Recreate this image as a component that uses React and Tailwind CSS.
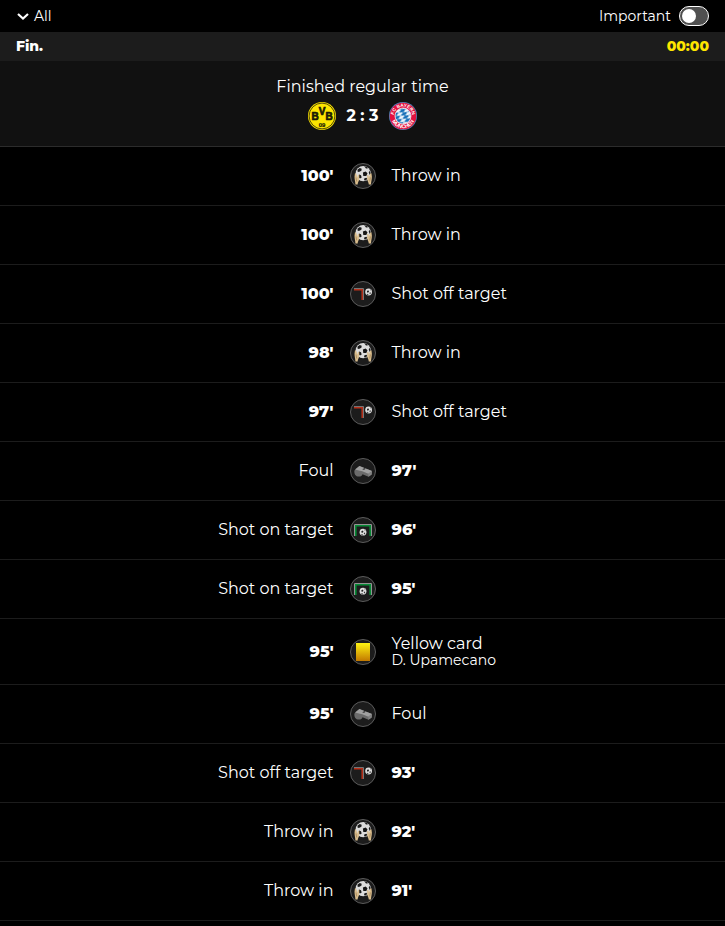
import { useState } from 'react';

const EVENTS = [
  { id: 1, side: 'away', minute: "100'", type: 'throw', label: 'Throw in' },
  { id: 2, side: 'away', minute: "100'", type: 'throw', label: 'Throw in' },
  { id: 3, side: 'away', minute: "100'", type: 'offTarget', label: 'Shot off target' },
  { id: 4, side: 'away', minute: "98'", type: 'throw', label: 'Throw in' },
  { id: 5, side: 'away', minute: "97'", type: 'offTarget', label: 'Shot off target' },
  { id: 6, side: 'home', minute: "97'", type: 'foul', label: 'Foul' },
  { id: 7, side: 'home', minute: "96'", type: 'onTarget', label: 'Shot on target' },
  { id: 8, side: 'home', minute: "95'", type: 'onTarget', label: 'Shot on target' },
  { id: 9, side: 'away', minute: "95'", type: 'yellow', label: 'Yellow card', player: 'D. Upamecano' },
  { id: 10, side: 'away', minute: "95'", type: 'foul', label: 'Foul' },
  { id: 11, side: 'home', minute: "93'", type: 'offTarget', label: 'Shot off target' },
  { id: 12, side: 'home', minute: "92'", type: 'throw', label: 'Throw in' },
  { id: 13, side: 'home', minute: "91'", type: 'throw', label: 'Throw in' },
];

function SmallBall({ cx, cy }) {
  return (
    <g transform={`translate(${cx} ${cy})`}>
      <circle r="3.4" fill="#dedede" />
      <path d="M-1.6-.9-.4-1.7.5-.5-.3.6-1.6.4z" fill="#222" />
      <path d="M.8.8 2 .2 2.2 1.6 1.1 2.2zM1.2-2.9 2.6-1.9 1.9-1.4zM-1.9 2.6-1.1 1.7-.2 2.2-.4 3.2z" fill="#333" />
    </g>
  );
}

function ThrowIn() {
  return (
    <>
      <circle cx="13.2" cy="10.6" r="7.6" fill="#dcdcdc" />
      <path d="m12.9 9.6 2.7-1.2 1.9 1.9-1.2 2.7-3 .1z" fill="#151515" />
      <path d="M7.6 6.6 9.8 4.9l1.9.8-.3 2-2.5 1.3-1.4-.5zM14.2 3.3l2.8.8.8 1.5-1.8-.2zM19.2 7.6l1.5 3-.9 1.5-1-2.4zM9 11.6l2 .6.7 2.2-1.7 1-1.6-1.3zM14.2 15.6l2-.9 1.3 1-1.9 1.9-1.5-.3z" fill="#1c1c1c" />
      <path d="M4.9 10.4c.8-.5 1.5.4 1.6 1.4l1 2.9.4-2.4c.3-.9 1.4-.6 1.4.3l-.2 4.2c-.2 1.5-1.3 2.5-1.5 4.6H5.4c0-2.8-.9-4.600-.9-7.600z" fill="#d9bd8d" />
      <path d="M21.500 10.4c-.8-.5-1.500.4-1.600 1.4l-1 2.900-.4-2.400c-.3-.9-1.400-.6-1.400.3l.2 4.200c.2 1.500 1.300 2.500 1.500 4.600H21c0-2.800.9-4.600.9-7.600z" fill="#d9bd8d" />
      <path d="M6 14.5 6.7 18.5M20.4 14.5l-.7 4" fill="none" stroke="#a17f50" strokeWidth=".7" />
    </>
  );
}

function OffTarget() {
  return (
    <>
      <path d="M4 7.5h9.5V19" fill="none" stroke="#757575" strokeWidth="1" />
      <path d="M4 8.8h8.2V19" fill="none" stroke="#b8301a" strokeWidth="1.5" />
      <SmallBall cx={18.6} cy={11} />
    </>
  );
}

function OnTarget() {
  return (
    <>
      <path d="M4.5 19V7.5h17V19" fill="none" stroke="#939393" strokeWidth="1" />
      <path d="M5.8 19V8.8h14.4V19" fill="none" stroke="#078b36" strokeWidth="1.6" />
      <SmallBall cx={13} cy={15.2} />
    </>
  );
}

function Whistle() {
  return (
    <>
      <path d="M4.4 12.4 9.4 8l12.600 5-.3 3.500-3.200 2.200-6-2.400c-.4 1.600-1.900 2.400-3.700 2.300-3.200-.2-4.800-2.600-4.400-6.200z" fill="#6b6b6b" />
      <path d="M5 11.6 9.4 8 22 13l-3.6 2.7-6.1-2.5-2.3-.4z" fill="#a0a0a0" />
      <path d="m18.4 15.7 3.6-2.7-.3 3.5-3.2 2.2z" fill="#858585" />
      <path d="m12.2 11.2 2.3-1.1 1.2.5-1.6 1.4z" fill="#3b3b3b" />
    </>
  );
}

function YellowCard() {
  return (
    <>
      <defs>
        <linearGradient id="card" x1="0" y1="0" x2="0" y2="1">
          <stop offset="0" stopColor="#fff412" />
          <stop offset="1" stopColor="#c27800" />
        </linearGradient>
      </defs>
      <path d="M6 4h14v18H6z" fill="url(#card)" />
    </>
  );
}

const ICONS = {
  throw: ThrowIn,
  offTarget: OffTarget,
  onTarget: OnTarget,
  foul: Whistle,
  yellow: YellowCard,
};

function EventIcon({ type }) {
  const Icon = ICONS[type];
  return (
    <svg viewBox="0 0 26 26" className="size-[26px]" aria-hidden="true">
      <circle cx="13" cy="13" r="12.5" fill="#1c1c1c" stroke="#5c5c5c" />
      <Icon />
    </svg>
  );
}

function DortmundLogo() {
  return (
    <svg viewBox="0 0 28 28" className="size-7" role="img" aria-label="Borussia Dortmund">
      <circle cx="14" cy="14" r="14" fill="#f5df00" />
      <circle cx="14" cy="14" r="12.9" fill="#fde500" stroke="#29250a" strokeWidth=".8" />
      <g fill="#1b1905" stroke="#1b1905" strokeWidth=".7" textAnchor="middle" fontFamily="Liberation Sans, sans-serif" fontWeight="700">
        <text x="7" y="18.2" fontSize="10">B</text>
        <text x="14" y="12.5" fontSize="10">V</text>
        <text x="21" y="18.2" fontSize="10">B</text>
        <text x="14" y="24.6" fontSize="6" strokeWidth=".2">09</text>
      </g>
    </svg>
  );
}

function BayernLogo() {
  return (
    <svg viewBox="0 0 28 28" className="size-7" role="img" aria-label="Bayern München">
      <defs>
        <pattern id="lozenge" width="3.6" height="8" patternUnits="userSpaceOnUse" patternTransform="rotate(62 14 14)">
          <path d="M0 0h3.6v8H0z" fill="#edf5fb" />
          <path d="m1.8 0 1.8 4-1.8 4L0 4z" fill="#1670b8" />
        </pattern>
        <path id="crestTop" d="M4.8 14a9.2 9.2 0 0 1 18.4 0" />
        <path id="crestBottom" d="M1.7 14a12.3 12.3 0 0 0 24.6 0" />
      </defs>
      <circle cx="14" cy="14" r="14" fill="#4a86bd" />
      <circle cx="14" cy="14" r="13.3" fill="#e4103f" />
      <circle cx="14" cy="14" r="8" fill="url(#lozenge)" stroke="#f7dfe6" strokeWidth=".8" />
      <g fill="#fff" textAnchor="middle" fontFamily="Liberation Sans, sans-serif" fontWeight="700">
        <text fontSize="4.6">
          <textPath href="#crestTop" startOffset="50%">FC BAYERN</textPath>
        </text>
        <text fontSize="5.4">
          <textPath href="#crestBottom" startOffset="50%">MÜNCHEN</textPath>
        </text>
      </g>
    </svg>
  );
}

function EventRow({ event }) {
  const minute = <span className="font-extrabold">{event.minute}</span>;
  const details = (
    <div>
      <p>{event.label}</p>
      {event.player && <p className="text-sm leading-[15px]">{event.player}</p>}
    </div>
  );
  const isHome = event.side === 'home';

  return (
    <li className="grid grid-cols-[1fr_auto_1fr] items-center gap-4 border-b border-[#1c1c1c] px-4 py-4 leading-[18px]">
      <div className="text-right">{isHome ? details : minute}</div>
      <EventIcon type={event.type} />
      <div>{isHome ? minute : details}</div>
    </li>
  );
}

export default function App() {
  const [important, setImportant] = useState(false);

  return (
    <main className="min-h-screen bg-black font-[Montserrat,Inter,sans-serif] text-base text-white">
      <header className="flex h-8 items-center justify-between px-4 text-sm">
        <button type="button" className="flex items-center gap-1">
          <svg viewBox="0 0 14 14" className="size-3.5" aria-hidden="true">
            <path d="m2 5 5 4.5L12 5" fill="none" stroke="#fff" strokeWidth="2.2" />
          </svg>
          All
        </button>
        <label className="flex items-center gap-2">
          Important
          <input
            type="checkbox"
            checked={important}
            onChange={(e) => setImportant(e.target.checked)}
            className="flex h-5 w-[30px] appearance-none items-center rounded-full border border-white bg-[#505050] px-0.5 before:size-3.5 before:rounded-full before:bg-white checked:justify-end"
          />
        </label>
      </header>

      <div className="flex items-center justify-between bg-[#1c1c1c] px-4 py-1 text-sm leading-[21px] font-extrabold">
        <h2>Fin.</h2>
        <time className="text-[#ffe600]">00:00</time>
      </div>

      <section className="flex flex-col items-center gap-[5px] border-b border-[#2c2c2c] bg-[#111] py-4">
        <p className="leading-5">Finished regular time</p>
        <div className="flex items-center gap-2.5">
          <DortmundLogo />
          <span className="font-bold">2 : 3</span>
          <BayernLogo />
        </div>
      </section>

      <ul>
        {EVENTS.map((event) => (
          <EventRow key={event.id} event={event} />
        ))}
      </ul>
    </main>
  );
}
